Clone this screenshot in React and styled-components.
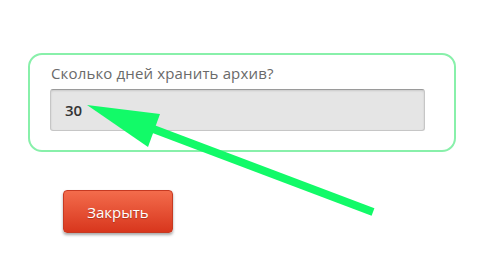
import React from "react";
import styled, { createGlobalStyle } from "styled-components";

const Global = createGlobalStyle`
  html, body { margin: 0; padding: 0; background: #ffffff; }
  body { font-family: "Open Sans", "Noto Sans", sans-serif; }
`;

const Page = styled.div`
  position: relative;
  width: 480px;
  height: 260px;
  padding: 53px 0 0 28px;
  box-sizing: border-box;
  overflow: hidden;
`;

const Panel = styled.div`
  width: 428px;
  box-sizing: border-box;
  border: 2px solid #88f0aa;
  border-radius: 14px;
  padding: 9px 29px 19px 20px;
`;

const Label = styled.div`
  font-size: 15px;
  line-height: 18px;
  letter-spacing: 0.15px;
  color: #6a6a6a;
  margin: 0 0 7px 1px;
`;

const Input = styled.div`
  height: 42px;
  box-sizing: border-box;
  background: #e5e5e5;
  border: 1px solid #c6c6c6;
  border-top-color: #9a9a9a;
  border-radius: 3px;
  box-shadow: inset 0 1px 2px rgba(0, 0, 0, 0.12);
  display: flex;
  align-items: center;
  padding-left: 14px;
  font-size: 15px;
  font-weight: 600;
  color: #333333;
`;

const Button = styled.button`
  margin: 38px 0 0 35px;
  width: 110px;
  height: 43px;
  border: 1px solid #c63a22;
  border-radius: 4px;
  background: linear-gradient(#f36c4c, #d8361d);
  box-shadow: 0 2px 3px rgba(0, 0, 0, 0.35);
  color: #ffffff;
  font-family: "Open Sans", "Noto Sans", sans-serif;
  font-size: 15px;
  text-shadow: 0 1px 1px rgba(0, 0, 0, 0.25);
  cursor: pointer;
  display: block;
`;

const Overlay = styled.svg`
  position: absolute;
  left: 0;
  top: 0;
  width: 480px;
  height: 260px;
  pointer-events: none;
`;

export default function App() {
  return (
    <>
      <Global />
      <Page>
        <Panel>
          <Label>Сколько дней хранить архив?</Label>
          <Input>30</Input>
        </Panel>
        <Button>Закрыть</Button>
        <Overlay viewBox="0 0 480 260">
          <line x1="373" y1="212" x2="148" y2="127" stroke="#12fa68" strokeWidth="8" />
          <polygon points="87,105 160,114 148,147" fill="#12fa68" />
        </Overlay>
      </Page>
    </>
  );
}
